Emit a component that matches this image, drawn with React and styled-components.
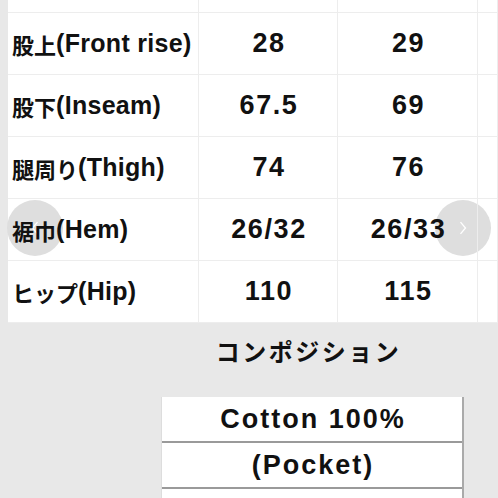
import styled, { createGlobalStyle } from 'styled-components';

const GlobalStyle = createGlobalStyle`
  html, body {
    margin: 0;
    padding: 0;
    background: #e8e8e8;
    overflow: hidden;
  }
  body {
    font-family: "Liberation Sans", "Noto Sans CJK JP", sans-serif;
    color: #111;
  }
`;

const rows = [
  { jp: '股上', en: '(Front rise)', a: '28', b: '29' },
  { jp: '股下', en: '(Inseam)', a: '67.5', b: '69' },
  { jp: '腿周り', en: '(Thigh)', a: '74', b: '76' },
  { jp: '裾巾', en: '(Hem)', a: '26/32', b: '26/33' },
  { jp: 'ヒップ', en: '(Hip)', a: '110', b: '115' },
];

const App = () => {
  return (
    <Page>
      <GlobalStyle />
      <TableWrap>
        <SizeTable>
          <Cell $h={12} />
          <Cell $h={12} />
          <Cell $h={12} />
          <Cell $h={12} />
          {rows.map((r) => (
            <Row key={r.jp}>
              <LabelCell>
                <Jp>{r.jp}</Jp>
                {r.en}
              </LabelCell>
              <NumCell>{r.a}</NumCell>
              <NumCell>{r.b}</NumCell>
              <Cell />
            </Row>
          ))}
        </SizeTable>
        <NavCircle $side="left">
          <Chevron viewBox="0 0 12 20">
            <path d="M9 3 L3 10 L9 17" />
          </Chevron>
        </NavCircle>
        <NavCircle $side="right">
          <Chevron viewBox="0 0 12 20">
            <path d="M3 3 L9 10 L3 17" />
          </Chevron>
        </NavCircle>
      </TableWrap>
      <Composition>
        <Title>コンポジション</Title>
        <CompBox>
          <CompRow>Cotton 100%</CompRow>
          <CompRow>(Pocket)</CompRow>
          <CompRow />
        </CompBox>
      </Composition>
    </Page>
  );
};

export default App;

const Page = styled.div`
  width: 498px;
  height: 498px;
  overflow: hidden;
`;

const TableWrap = styled.div`
  position: relative;
  margin-left: 8px;
  background: #fff;
`;

const SizeTable = styled.div`
  display: grid;
  grid-template-columns: 191px 139px 140px 1fr;
`;

const Row = styled.div`
  display: contents;
`;

const Cell = styled.div`
  height: ${(p) => (p.$h ? `${p.$h}px` : '61px')};
  border-right: 1px solid #ededed;
  border-bottom: 1px solid #ededed;
  display: flex;
  align-items: center;
  box-sizing: content-box;
  position: relative;
  z-index: 2;
`;

const LabelCell = styled(Cell)`
  padding-left: 4px;
  font-size: 25px;
  font-weight: bold;
  letter-spacing: 0.3px;
  white-space: nowrap;
`;

const Jp = styled.span`
  font-family: "Noto Sans CJK JP", sans-serif;
  font-size: 22px;
  letter-spacing: 0;
`;

const NumCell = styled(Cell)`
  justify-content: center;
  padding-left: 2px;
  font-size: 27px;
  font-weight: bold;
  letter-spacing: 1.6px;
`;

const NavCircle = styled.div`
  position: absolute;
  top: 200px;
  ${(p) => (p.$side === 'left' ? 'left: -1px;' : 'left: 427px;')}
  width: 56px;
  height: 56px;
  border-radius: 50%;
  background: #dedede;
  display: flex;
  align-items: center;
  justify-content: center;
  z-index: 1;
`;

const Chevron = styled.svg`
  width: 10px;
  height: 18px;
  fill: none;
  stroke: #fff;
  stroke-width: 1.6;
`;

const Composition = styled.div`
  margin-left: 161px;
  width: 303px;
  display: flex;
  flex-direction: column;
  align-items: center;
`;

const Title = styled.div`
  height: 54px;
  padding-bottom: 20px;
  display: flex;
  align-items: center;
  padding-right: 8px;
  font-family: "Noto Sans CJK JP", sans-serif;
  font-size: 24px;
  font-weight: bold;
  letter-spacing: 2.5px;
`;

const CompBox = styled.div`
  width: 100%;
  background: #fff;
  border-right: 2px solid #aaa;
  border-left: 1px solid #ddd;
  box-sizing: border-box;
`;

const CompRow = styled.div`
  height: 44px;
  border-bottom: 2px solid #9a9a9a;
  display: flex;
  align-items: center;
  justify-content: center;
  padding-left: 2px;
  font-size: 27px;
  font-weight: bold;
  letter-spacing: 2px;
`;
